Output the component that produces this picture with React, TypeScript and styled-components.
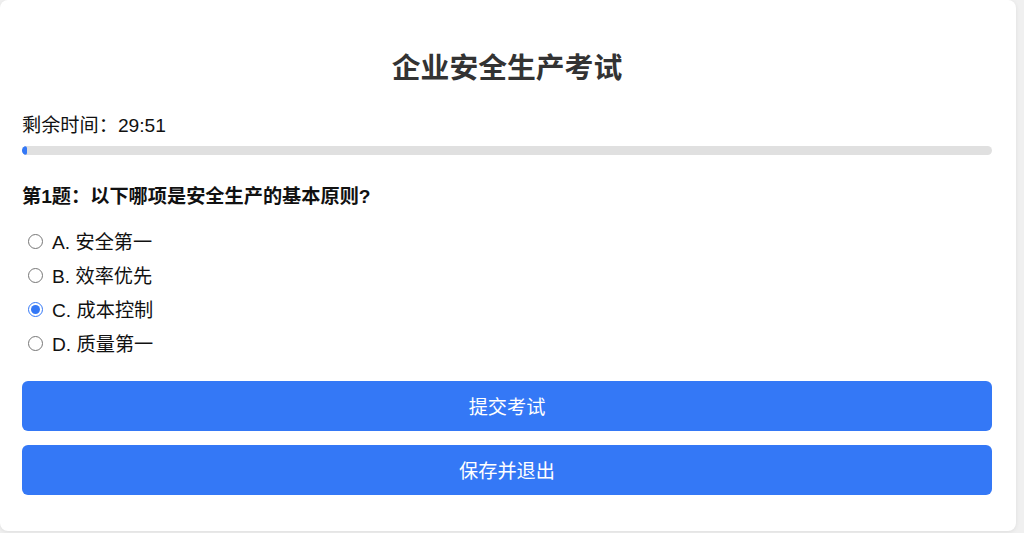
import styled, { createGlobalStyle } from "styled-components";
import { useState } from "react";

const GlobalStyle = createGlobalStyle`
  html, body {
    margin: 0;
    padding: 0;
    background: #f0f0f0;
    font-family: "Liberation Sans", "Noto Sans CJK SC", sans-serif;
  }
`

const Page = styled.div`
  width: 1024px;
  height: 533px;
  padding-right: 8px;
  box-sizing: border-box;
  overflow: hidden;
`

const Card = styled.div`
  width: 1016px;
  height: 531px;
  box-sizing: border-box;
  background: #fff;
  border-radius: 8px;
  box-shadow: 0 1px 4px rgba(0, 0, 0, 0.08);
  padding: 48px 24px 36px 22px;
  display: flex;
  flex-direction: column;
`

const Title = styled.h1`
  margin: 0;
  font-size: 28.8px;
  line-height: 40px;
  font-weight: 700;
  color: #333;
  text-align: center;
`

const Timer = styled.div`
  margin-top: 26px;
  font-size: 19.2px;
  line-height: 24px;
  color: #111;
`

const Track = styled.div`
  margin-top: 8px;
  height: 11px;
  border-radius: 6px;
  background: #e0e0e0;
  overflow: hidden;
`

const Fill = styled.div`
  height: 100%;
  background: #3478f6;
  border-radius: 6px;
`

const Question = styled.div`
  margin-top: 29px;
  font-size: 19.2px;
  line-height: 26px;
  font-weight: 700;
  color: #111;
`

const Options = styled.div`
  margin-top: 19px;
  display: flex;
  flex-direction: column;
  gap: 10px;
`

const Option = styled.label`
  display: flex;
  align-items: center;
  height: 24px;
  font-size: 19.2px;
  color: #111;
  cursor: pointer;
`

const Radio = styled.input`
  width: 15px;
  height: 15px;
  margin: 0 9px 0 6px;
  accent-color: #3478f6;
`

const Actions = styled.div`
  margin-top: 26px;
  display: flex;
  flex-direction: column;
  gap: 14px;
`

const Button = styled.button`
  height: 50px;
  border: none;
  border-radius: 6px;
  background: #3478f6;
  color: #fff;
  font-family: inherit;
  font-size: 19.2px;
  cursor: pointer;
`

const options = [
  { key: "A", text: "安全第一" },
  { key: "B", text: "效率优先" },
  { key: "C", text: "成本控制" },
  { key: "D", text: "质量第一" },
];

export default function App() {
  const [answer, setAnswer] = useState("C");
  const total = 30 * 60;
  const left = 29 * 60 + 51;
  const pct = ((total - left) / total) * 100;

  return (
    <>
      <GlobalStyle />
      <Page>
        <Card>
          <Title>企业安全生产考试</Title>
          <Timer>剩余时间：29:51</Timer>
          <Track>
            <Fill style={{ width: `${pct}%` }} />
          </Track>
          <Question>第1题：以下哪项是安全生产的基本原则?</Question>
          <Options>
            {options.map((o) => (
              <Option key={o.key}>
                <Radio
                  type="radio"
                  name="q1"
                  checked={answer === o.key}
                  onChange={() => setAnswer(o.key)}
                />
                {o.key}. {o.text}
              </Option>
            ))}
          </Options>
          <Actions>
            <Button>提交考试</Button>
            <Button>保存并退出</Button>
          </Actions>
        </Card>
      </Page>
    </>
  );
}
